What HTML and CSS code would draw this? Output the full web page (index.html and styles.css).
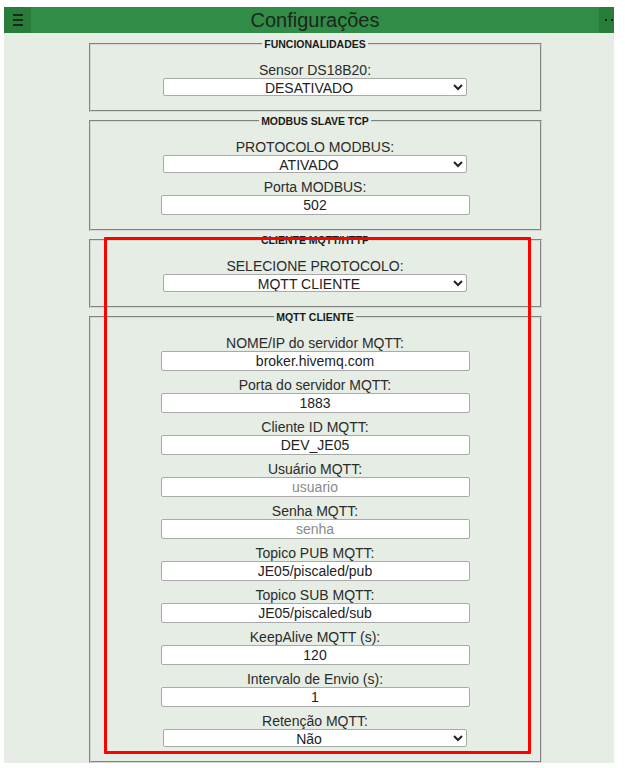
FILE: index.html
```html
<!DOCTYPE html>
<html lang="pt-BR">
<head>
    <meta charset="UTF-8">
    <meta name="viewport" content="width=device-width, initial-scale=1.0">
    <title>Configurações</title>
    <link rel="stylesheet" href="styles.css">
</head>
<body>
    <div class="frame">
        <div class="app">
            <header class="topbar">
                <button class="side-btn menu-btn" aria-label="Menu">
                    <span></span><span></span><span></span>
                </button>
                <h1>Configurações</h1>
                <button class="side-btn more-btn" aria-label="Mais">
                    <i></i><i></i><i></i>
                </button>
            </header>

            <main class="content">
                <fieldset class="group">
                    <legend>FUNCIONALIDADES</legend>
                    <div class="field">
                        <label for="ds18b20">Sensor DS18B20:</label>
                        <select id="ds18b20"><option>DESATIVADO</option><option>ATIVADO</option></select>
                    </div>
                </fieldset>

                <fieldset class="group">
                    <legend>MODBUS SLAVE TCP</legend>
                    <div class="field">
                        <label for="modbus">PROTOCOLO MODBUS:</label>
                        <select id="modbus"><option>ATIVADO</option><option>DESATIVADO</option></select>
                    </div>
                    <div class="field">
                        <label for="modbusPort">Porta MODBUS:</label>
                        <input id="modbusPort" type="text" value="502">
                    </div>
                </fieldset>

                <fieldset class="group">
                    <legend>CLIENTE MQTT/HTTP</legend>
                    <div class="field">
                        <label for="proto">SELECIONE PROTOCOLO:</label>
                        <select id="proto"><option>MQTT CLIENTE</option><option>HTTP CLIENTE</option></select>
                    </div>
                </fieldset>

                <fieldset class="group">
                    <legend>MQTT CLIENTE</legend>
                    <div class="field">
                        <label for="mqttHost">NOME/IP do servidor MQTT:</label>
                        <input id="mqttHost" type="text" value="broker.hivemq.com">
                    </div>
                    <div class="field">
                        <label for="mqttPort">Porta do servidor MQTT:</label>
                        <input id="mqttPort" type="text" value="1883">
                    </div>
                    <div class="field">
                        <label for="mqttId">Cliente ID MQTT:</label>
                        <input id="mqttId" type="text" value="DEV_JE05">
                    </div>
                    <div class="field">
                        <label for="mqttUser">Usuário MQTT:</label>
                        <input id="mqttUser" type="text" placeholder="usuario">
                    </div>
                    <div class="field">
                        <label for="mqttPass">Senha MQTT:</label>
                        <input id="mqttPass" type="text" placeholder="senha">
                    </div>
                    <div class="field">
                        <label for="mqttPub">Topico PUB MQTT:</label>
                        <input id="mqttPub" type="text" value="JE05/piscaled/pub">
                    </div>
                    <div class="field">
                        <label for="mqttSub">Topico SUB MQTT:</label>
                        <input id="mqttSub" type="text" value="JE05/piscaled/sub">
                    </div>
                    <div class="field">
                        <label for="keepAlive">KeepAlive MQTT (s):</label>
                        <input id="keepAlive" type="text" value="120">
                    </div>
                    <div class="field">
                        <label for="interval">Intervalo de Envio (s):</label>
                        <input id="interval" type="text" value="1">
                    </div>
                    <div class="field">
                        <label for="retain">Retenção MQTT:</label>
                        <select id="retain"><option>Não</option><option>Sim</option></select>
                    </div>
                </fieldset>
            </main>
        </div>

        <div class="highlight"></div>
    </div>
</body>
</html>
```

FILE: styles.css
```css
body {
    margin: 0;
    background-color: #fff;
    font-family: "Liberation Sans", Arial, sans-serif;
    color: #2b2b2b;
}
.frame {
    position: relative;
    width: 610px;
    padding: 7px 0 0 4px;
    overflow: hidden;
}
.app {
    width: 622px;
    background-color: #e6ede4;
}
.topbar {
    display: flex;
    align-items: stretch;
    height: 26px;
    background-color: #318c47;
}
.topbar h1 {
    flex: 1;
    margin: 0;
    font-size: 20px;
    font-weight: normal;
    line-height: 26px;
    text-align: center;
    color: #1c261c;
}
.side-btn {
    width: 27px;
    padding: 0;
    border: none;
    background-color: #287d3b;
    display: flex;
    flex-direction: column;
    align-items: center;
    justify-content: center;
}
.menu-btn span {
    display: block;
    width: 10px;
    height: 2px;
    margin: 1.5px 0;
    background-color: #1a2a1a;
}
.more-btn {
    flex-direction: row;
    justify-content: flex-start;
    padding-left: 6px;
    gap: 4px;
}
.more-btn i {
    display: block;
    width: 2px;
    height: 2px;
    background-color: #111;
}
.content {
    padding: 5px 0 0;
}
.group {
    box-sizing: border-box;
    width: 453px;
    margin: 0 auto 3px;
    padding: 12px 8px 14px;
    border: 2px groove #d6d6d6;
}
.group:last-child {
    margin-bottom: 0;
}
.group legend {
    margin: 0 auto;
    padding: 0 2px;
    font-size: 10.5px;
    font-weight: bold;
    line-height: 12px;
    color: #1a1a1a;
}
.field {
    display: flex;
    flex-direction: column;
    align-items: center;
    margin-bottom: 6px;
}
.field:last-child {
    margin-bottom: 0;
}
.field label {
    font-size: 14px;
    line-height: 16px;
    color: #2b2b2b;
}
.field input,
.field select {
    box-sizing: border-box;
    font-family: "Liberation Sans", Arial, sans-serif;
    font-size: 14px;
    color: #222;
    background-color: #fff;
    text-align: center;
    text-align-last: center;
}
.field input {
    width: 309px;
    height: 20px;
    padding: 0 4px;
    border: 1px solid #a9a9a9;
    border-radius: 2px;
}
.field input::placeholder {
    color: #8a8a8a;
}
.field select {
    width: 304px;
    height: 18px;
    padding: 0 2px;
    border: 1px solid #a9a9a9;
    border-radius: 2px;
}
.highlight {
    position: absolute;
    left: 104px;
    top: 237px;
    width: 421px;
    height: 511px;
    border: 3px solid #ff0000;
    border-radius: 1px;
    pointer-events: none;
}
```
